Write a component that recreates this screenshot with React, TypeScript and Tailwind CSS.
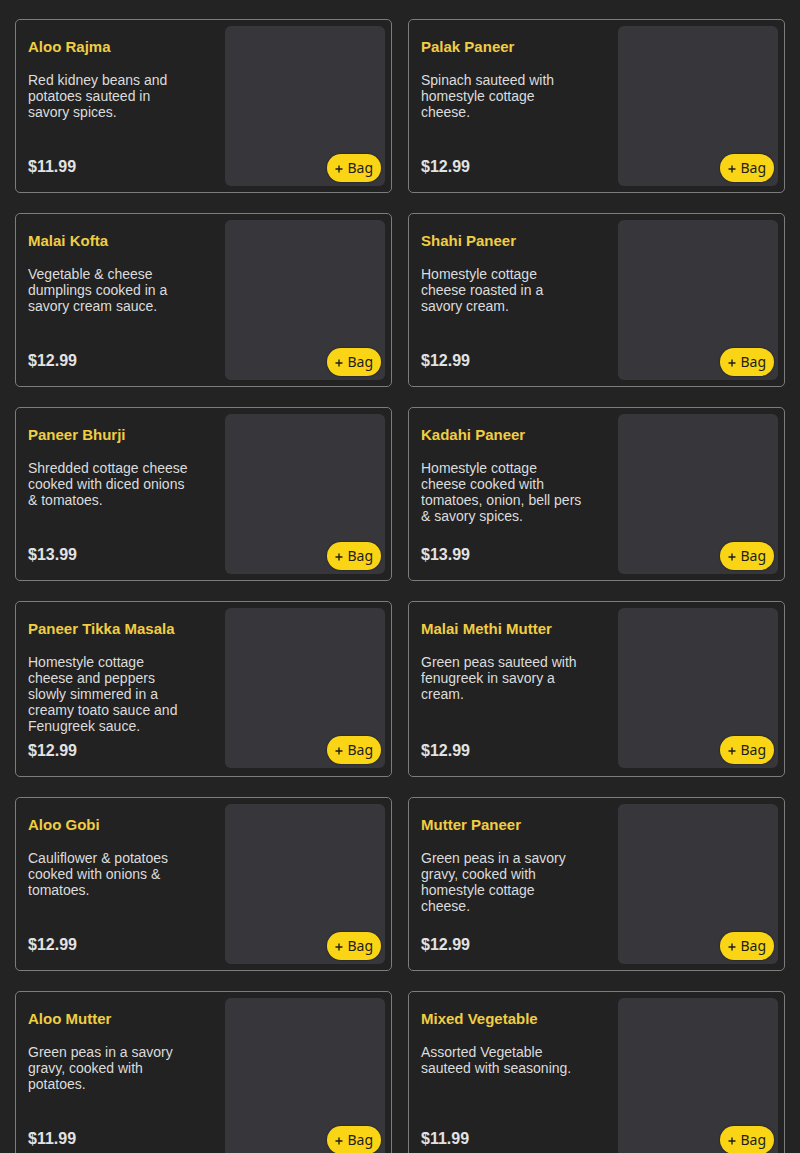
const items = [
  { name: 'Aloo Rajma', desc: 'Red kidney beans and potatoes sauteed in savory spices.', price: '$11.99' },
  { name: 'Palak Paneer', desc: 'Spinach sauteed with homestyle cottage cheese.', price: '$12.99' },
  { name: 'Malai Kofta', desc: 'Vegetable & cheese dumplings cooked in a savory cream sauce.', price: '$12.99' },
  { name: 'Shahi Paneer', desc: 'Homestyle cottage cheese roasted in a savory cream.', price: '$12.99' },
  { name: 'Paneer Bhurji', desc: 'Shredded cottage cheese cooked with diced onions & tomatoes.', price: '$13.99' },
  { name: 'Kadahi Paneer', desc: 'Homestyle cottage cheese cooked with tomatoes, onion, bell pers & savory spices.', price: '$13.99' },
  { name: 'Paneer Tikka Masala', desc: 'Homestyle cottage cheese and peppers slowly simmered in a creamy toato sauce and Fenugreek sauce.', price: '$12.99' },
  { name: 'Malai Methi Mutter', desc: 'Green peas sauteed with fenugreek in savory a cream.', price: '$12.99' },
  { name: 'Aloo Gobi', desc: 'Cauliflower & potatoes cooked with onions & tomatoes.', price: '$12.99' },
  { name: 'Mutter Paneer', desc: 'Green peas in a savory gravy, cooked with homestyle cottage cheese.', price: '$12.99' },
  { name: 'Aloo Mutter', desc: 'Green peas in a savory gravy, cooked with potatoes.', price: '$11.99' },
  { name: 'Mixed Vegetable', desc: 'Assorted Vegetable sauteed with seasoning.', price: '$11.99' },
]

interface Item {
  name: string
  desc: string
  price: string
}

function MenuCard({ item }: { item: Item }) {
  return (
    <div className="flex rounded-[5px] border border-[#7c7c7c] bg-[#222222] p-1.5">
      <div className="flex flex-1 flex-col pl-[6px] pt-[11px] pb-[7px]">
        <h3 className="text-[15px] font-bold leading-5 text-[#f0cd42]">{item.name}</h3>
        <p className="mt-[15px] max-w-[161px] text-[14px] leading-4 text-[#dcdcdc]">{item.desc}</p>
        <div className="mt-auto pt-[5px] text-base font-bold leading-6 text-[#e2e2e2]">{item.price}</div>
      </div>
      <div className="relative h-40 w-40 shrink-0 rounded-md bg-[#37373b]">
        {/* add to bag */}
        <button className="absolute right-1 bottom-1 flex h-7 items-center gap-1 rounded-full bg-[#fad516] px-2 text-[14px] leading-none text-[#1e1e1e] shadow-[0_0_2px_rgba(0,0,0,0.6)] [font-family:'Noto_Sans',sans-serif]">
          <svg width="8" height="8" viewBox="0 0 8 8" className="mt-[1px]">
            <path d="M4 0.5v7M0.5 4h7" stroke="currentColor" strokeWidth="1.4" />
          </svg>
          <span>Bag</span>
        </button>
      </div>
    </div>
  )
}

export default function App() {
  return (
    <div className="min-h-screen bg-[#232323] px-[15px] pt-[19px] pb-5 font-['Liberation_Sans',Arial,sans-serif]">
      <div className="grid grid-cols-2 gap-x-4 gap-y-5">
        {items.map((item) => (
          <MenuCard key={item.name} item={item} />
        ))}
      </div>
    </div>
  )
}
